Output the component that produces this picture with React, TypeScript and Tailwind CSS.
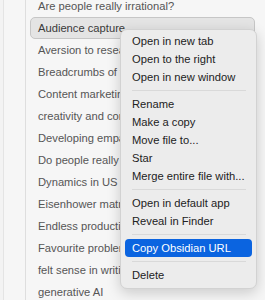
const FILES = [
  "Are people really irrational?",
  "Audience capture",
  "Aversion to research",
  "Breadcrumbs of thought",
  "Content marketing",
  "creativity and constraints",
  "Developing empathy",
  "Do people really change?",
  "Dynamics in US tech",
  "Eisenhower matrix",
  "Endless productivity",
  "Favourite problems",
  "felt sense in writing",
  "generative AI",
];

type MenuEntry = { label: string; active?: boolean } | "sep";

const MENU: MenuEntry[] = [
  { label: "Open in new tab" },
  { label: "Open to the right" },
  { label: "Open in new window" },
  "sep",
  { label: "Rename" },
  { label: "Make a copy" },
  { label: "Move file to..." },
  { label: "Star" },
  { label: "Merge entire file with..." },
  "sep",
  { label: "Open in default app" },
  { label: "Reveal in Finder" },
  "sep",
  { label: "Copy Obsidian URL", active: true },
  "sep",
  { label: "Delete" },
];

export default function App() {
  return (
    <div
      className="relative w-[265px] h-[300px] overflow-hidden bg-[#f6f6f6] flex"
      style={{ fontFamily: '"Liberation Sans", Arial, sans-serif' }}
    >
      {/* left ribbon */}
      <div className="w-[4px] shrink-0 bg-[#f3f3f3] border-r border-[#e4e4e4]" />
      <div className="w-[22px] shrink-0 bg-[#f6f6f6] border-r border-[#dedede]" />

      {/* file list */}
      <div className="flex-1 flex flex-col -mt-[5px] pl-[4px] pr-[10px]">
        {FILES.map((name, i) => (
          <div
            key={name}
            className={
              i === 1
                ? "h-[22px] shrink-0 flex items-center pl-[7px] rounded-[5px] border border-[#c6c6c6] bg-[#e4e4e4] text-[11.2px] text-[#3a3a3a] whitespace-nowrap"
                : "h-[22px] shrink-0 flex items-center pl-[8px] text-[11.2px] text-[#555555] whitespace-nowrap"
            }
          >
            {name}
          </div>
        ))}
      </div>

      {/* context menu */}
      <div className="absolute left-[120px] top-[29px] w-[137px] rounded-[7px] border border-[#d2d2d2] bg-[#ececec] shadow-[0_4px_14px_rgba(0,0,0,0.18)] pt-[2px] pb-[4px]">
        {MENU.map((item, i) =>
          item === "sep" ? (
            <div key={i} className="h-[9px] flex items-center pl-[11px] pr-[10px]">
              <div className="h-px w-full bg-[#d9d9d9]" />
            </div>
          ) : (
            <div
              key={i}
              className={
                item.active
                  ? "h-[18px] mx-[4px] px-[7px] flex items-center rounded-[4px] bg-[#0b64e0] text-white text-[11.2px] whitespace-nowrap"
                  : "h-[18px] mx-[4px] px-[7px] flex items-center text-[11.2px] text-[#222222] whitespace-nowrap"
              }
            >
              {item.label}
            </div>
          )
        )}
      </div>
    </div>
  );
}
